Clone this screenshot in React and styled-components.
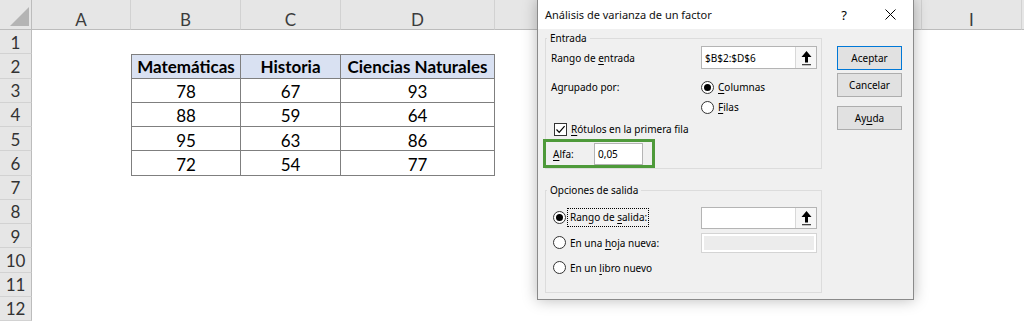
import React from "react";
import styled, { createGlobalStyle, css } from "styled-components";

const GlobalStyle = createGlobalStyle`
  html, body { margin: 0; padding: 0; background: #fff; overflow: hidden; }
  #root { width: 1024px; height: 321px; }
`;

/* E–H lie under the dialog, so their letters are never seen */
const COLS = ["A", "B", "C", "D", "", "", "", "", "I", ""];
const WIDTHS = [99, 110, 100, 154, 107, 107, 107, 106, 100, 20];
const ROW_H = 24.25;

const Sheet = styled.div`
  position: relative;
  width: 1024px;
  height: 321px;
  overflow: hidden;
  display: grid;
  grid-template-columns: 32px ${WIDTHS.map((w) => w + "px").join(" ")};
  grid-template-rows: 30px repeat(12, ${ROW_H}px);
  font-family: "Lato", "Open Sans", sans-serif;
  background: #fff;
`;

const Corner = styled.div`
  position: relative;
  background: #e6e6e6;
  border-right: 1px solid #bcbcbc;
  border-bottom: 1px solid #bcbcbc;
  box-sizing: border-box;
`;

const CornerTri = styled.svg`
  position: absolute;
  right: 1px;
  bottom: 2px;
`;

const ColHeader = styled.div`
  background: #e6e6e6;
  border-right: 1px solid #d2d2d2;
  border-bottom: 1px solid #bcbcbc;
  box-sizing: border-box;
  display: flex;
  justify-content: center;
  align-items: center;
  padding-top: 9px;
  font-size: 17px;
  color: #3c3c3c;
`;

const RowHeader = styled.div`
  background: #e6e6e6;
  border-right: 1px solid #bcbcbc;
  border-bottom: 1px solid #d2d2d2;
  box-sizing: border-box;
  display: flex;
  justify-content: center;
  align-items: center;
  padding-top: 1px;
  font-size: 17px;
  color: #333;
`;

const Cell = styled.div`
  box-sizing: border-box;
  display: flex;
  justify-content: center;
  align-items: center;
  font-size: 17px;
  color: #000;
  white-space: nowrap;
  ${(p) =>
    p.$boxed &&
    css`
      border-right: 1px solid #7f7f7f;
      border-bottom: 1px solid #7f7f7f;
      padding-top: 3px;
    `}
  ${(p) => p.$top && css`border-top: 1px solid #7f7f7f; padding-top: 1px;`}
  ${(p) => p.$left && css`border-left: 1px solid #7f7f7f;`}
  ${(p) =>
    p.$head &&
    css`
      background: #d9e1f2;
      font-weight: 700;
    `}
`;

const TABLE = [
  ["Matemáticas", "Historia", "Ciencias Naturales"],
  ["78", "67", "93"],
  ["88", "59", "64"],
  ["95", "63", "86"],
  ["72", "54", "77"],
];

/* ---------------- dialog ---------------- */

const Dialog = styled.div`
  position: absolute;
  left: 537px;
  top: -1px;
  width: 377px;
  height: 301px;
  box-sizing: border-box;
  background: #f0f0f0;
  border: 1px solid #8a8a8a;
  box-shadow: 0 0 14px rgba(0, 0, 0, 0.28);
  display: flex;
  flex-direction: column;
  font-family: "Noto Sans", "Open Sans", sans-serif;
  font-size: 10px;
  color: #000;
`;

const TitleBar = styled.div`
  height: 29px;
  flex: none;
  background: #fff;
  display: flex;
  align-items: center;
  padding-left: 7px;
`;

const Title = styled.div`
  flex: 1;
  font-size: 11px;
  color: #111;
`;

const CaptionBtn = styled.div`
  width: 46px;
  height: 29px;
  display: flex;
  align-items: center;
  justify-content: center;
  font-size: 13px;
`;

const Body = styled.div`
  flex: 1;
  display: flex;
  padding: 9px 11px 0 7px;
`;

const LeftCol = styled.div`
  width: 277px;
  display: flex;
  flex-direction: column;
  gap: 21px;
`;

const Group = styled.div`
  position: relative;
  height: ${(p) => p.$h}px;
  box-sizing: border-box;
  border: 1px solid #dcdcdc;
  display: flex;
  flex-direction: column;
  padding: ${(p) => p.$pt}px 0 0 ${(p) => p.$pl}px;
`;

const Legend = styled.div`
  position: absolute;
  left: 1px;
  top: -9px;
  padding: 0 3px;
  background: #f0f0f0;
  line-height: 16px;
`;

const Row = styled.div`
  display: flex;
  align-items: ${(p) => (p.$top ? "flex-start" : "center")};
  height: ${(p) => p.$h || 24}px;
  margin-top: ${(p) => p.$mt || 0}px;
`;

const LabelCol = styled.div`
  width: ${(p) => p.$w}px;
  flex: none;
  line-height: 20px;
`;

const U = styled.span`
  text-decoration: underline;
  text-underline-offset: 2px;
`;

const RefEdit = styled.div`
  display: flex;
  width: 116px;
  height: ${(p) => p.$h || 23}px;
  box-sizing: border-box;
  border: 1px solid #b4b4b4;
  background: #fff;
`;

const RefText = styled.div`
  flex: 1;
  display: flex;
  align-items: center;
  padding-left: 3px;
  border-right: 1px solid #d8d8d8;
`;

const RefBtn = styled.div`
  width: 20px;
  flex: none;
  display: flex;
  align-items: center;
  justify-content: center;
  background: #f6f6f6;
`;

const DisabledBox = styled.div`
  width: 116px;
  height: 20px;
  box-sizing: border-box;
  border: 1px solid #d4d4d4;
  background: #fff;
  padding: 2px;
  display: flex;
`;

const DisabledFill = styled.div`
  flex: 1;
  background: #ececec;
`;

const RadioList = styled.div`
  display: flex;
  flex-direction: column;
`;

const Option = styled.div`
  display: flex;
  align-items: center;
  height: 20px;
  gap: 4px;
`;

const RadioCircle = styled.span`
  width: 13px;
  height: 13px;
  flex: none;
  box-sizing: border-box;
  border-radius: 50%;
  border: 1px solid #333;
  background: #fff;
  display: flex;
  align-items: center;
  justify-content: center;
  &::after {
    content: "";
    width: 7px;
    height: 7px;
    border-radius: 50%;
    background: ${(p) => (p.$on ? "#000" : "transparent")};
  }
`;

const CheckBox = styled.span`
  width: 13px;
  height: 13px;
  flex: none;
  box-sizing: border-box;
  border: 1px solid #333;
  background: #fff;
  display: flex;
  align-items: center;
  justify-content: center;
  margin-left: 3px;
`;

const Focus = styled.span`
  border: 1px dotted #000;
  padding: 0 1px 0 2px;
  margin-left: -3px;
  line-height: 17px;
`;

const AlfaBox = styled.div`
  display: flex;
  align-items: center;
  margin-left: -8px;
  width: 112px;
  height: 31px;
  box-sizing: border-box;
  border: 3px solid #4e9a3a;
  padding-left: 7px;
`;

const TextInput = styled.div`
  width: ${(p) => p.$w}px;
  height: 22px;
  box-sizing: border-box;
  border: 1px solid #b4b4b4;
  background: #fff;
  display: flex;
  align-items: center;
  padding-left: 3px;
`;

const BtnCol = styled.div`
  margin-left: 15px;
  padding-top: 8px;
  display: flex;
  flex-direction: column;
`;

const Button = styled.div`
  width: 65px;
  height: 24px;
  box-sizing: border-box;
  border: 1px solid ${(p) => (p.$default ? "#0078d7" : "#adadad")};
  background: #e1e1e1;
  display: flex;
  align-items: center;
  justify-content: center;
  margin-top: ${(p) => p.$mt || 0}px;
`;

const UpArrow = () => (
  <svg width="11" height="16" viewBox="0 0 11 16">
    <path d="M5.5 1 L10.5 7 H7 V12.5 H4 V7 H0.5 Z" fill="#000" />
    <rect x="1" y="14" width="9" height="1.3" fill="#444" />
  </svg>
);

const CloseIcon = () => (
  <svg width="11" height="11" viewBox="0 0 11 11">
    <path d="M0.5 0.5 L10.5 10.5 M10.5 0.5 L0.5 10.5" stroke="#000" strokeWidth="1" />
  </svg>
);

const CheckMark = () => (
  <svg width="11" height="11" viewBox="0 0 11 11">
    <path d="M1.5 5.5 L4.2 8.3 L9.6 2.2" stroke="#000" strokeWidth="1.2" fill="none" />
  </svg>
);

function AnovaDialog() {
  return (
    <Dialog>
      <TitleBar>
        <Title>Análisis de varianza de un factor</Title>
        <CaptionBtn>?</CaptionBtn>
        <CaptionBtn>
          <CloseIcon />
        </CaptionBtn>
      </TitleBar>
      <Body>
        <LeftCol>
          <Group $h={131} $pt={7} $pl={5}>
            <Legend>Entrada</Legend>
            <Row $h={23}>
              <LabelCol $w={150}>
                Rango de <U>e</U>ntrada
              </LabelCol>
              <RefEdit>
                <RefText>$B$2:$D$6</RefText>
                <RefBtn>
                  <UpArrow />
                </RefBtn>
              </RefEdit>
            </Row>
            <Row $h={40} $mt={8} $top>
              <LabelCol $w={150}>Agrupado por:</LabelCol>
              <RadioList>
                <Option>
                  <RadioCircle $on />
                  <span>
                    <U>C</U>olumnas
                  </span>
                </Option>
                <Option>
                  <RadioCircle />
                  <span>
                    <U>F</U>ilas
                  </span>
                </Option>
              </RadioList>
            </Row>
            <Row $h={20} $mt={2}>
              <Option>
                <CheckBox>
                  <CheckMark />
                </CheckBox>
                <span>
                  <U>R</U>ótulos en la primera fila
                </span>
              </Option>
            </Row>
            <AlfaBox>
              <LabelCol $w={41}>
                <U>A</U>lfa:
              </LabelCol>
              <TextInput $w={49}>0,05</TextInput>
            </AlfaBox>
          </Group>
          <Group $h={103} $pt={14} $pl={7}>
            <Legend>Opciones de salida</Legend>
            <Row $h={25}>
              <LabelCol $w={148}>
                <Option>
                  <RadioCircle $on />
                  <Focus>
                    Rango de <U>s</U>alida:
                  </Focus>
                </Option>
              </LabelCol>
              <RefEdit $h={22}>
                <RefText />
                <RefBtn>
                  <UpArrow />
                </RefBtn>
              </RefEdit>
            </Row>
            <Row $h={25}>
              <LabelCol $w={148}>
                <Option>
                  <RadioCircle />
                  <span>
                    En una <U>h</U>oja nueva:
                  </span>
                </Option>
              </LabelCol>
              <DisabledBox>
                <DisabledFill />
              </DisabledBox>
            </Row>
            <Row $h={25}>
              <Option>
                <RadioCircle />
                <span>
                  En un <U>l</U>ibro nuevo
                </span>
              </Option>
            </Row>
          </Group>
        </LeftCol>
        <BtnCol>
          <Button $default>Aceptar</Button>
          <Button $mt={3}>Cancelar</Button>
          <Button $mt={9}>
            Ay<U>u</U>da
          </Button>
        </BtnCol>
      </Body>
    </Dialog>
  );
}

export default function App() {
  const rows = [];
  for (let r = 1; r <= 12; r++) {
    const cells = [<RowHeader key={"h" + r}>{r}</RowHeader>];
    COLS.forEach((c, ci) => {
      const tr = r - 2;
      const tc = ci - 1;
      const inTable = tr >= 0 && tr < 5 && tc >= 0 && tc < 3;
      cells.push(
        <Cell
          key={"c" + ci + "-" + r}
          $boxed={inTable}
          $top={inTable && tr === 0}
          $left={inTable && tc === 0}
          $head={inTable && tr === 0}
        >
          {inTable ? TABLE[tr][tc] : null}
        </Cell>
      );
    });
    rows.push(...cells);
  }
  return (
    <>
      <GlobalStyle />
      <Sheet>
        <Corner>
          <CornerTri width="20" height="20" viewBox="0 0 20 20">
            <path d="M19 0 L19 19 L0 19 Z" fill="#b4b4b4" />
          </CornerTri>
        </Corner>
        {COLS.map((c, i) => (
          <ColHeader key={"col" + i}>{c}</ColHeader>
        ))}
        {rows}
        <AnovaDialog />
      </Sheet>
    </>
  );
}
